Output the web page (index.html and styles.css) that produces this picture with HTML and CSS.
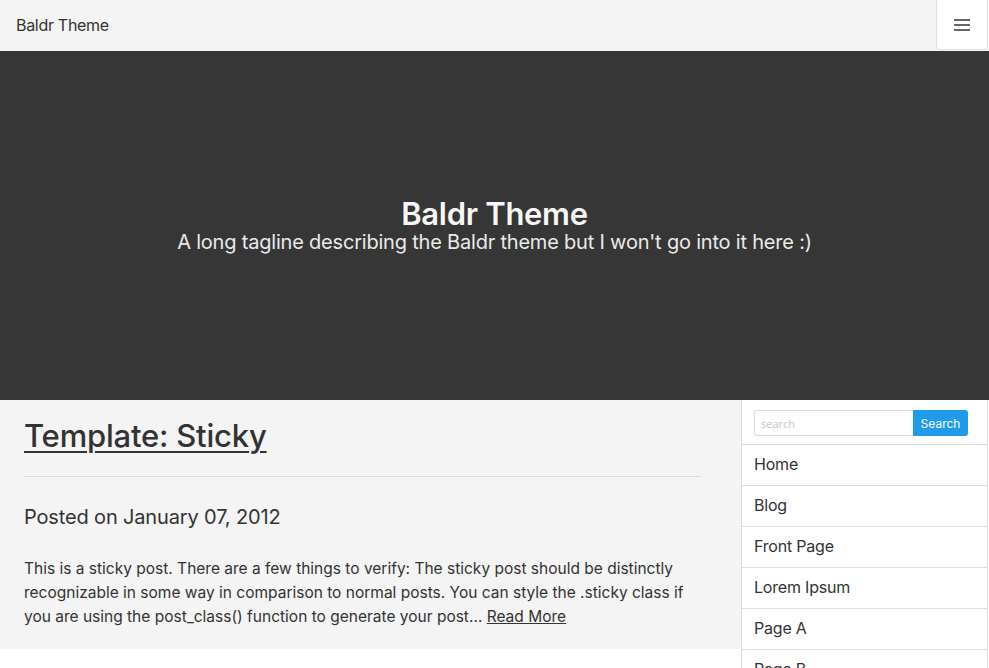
FILE: index.html
```html
<!DOCTYPE html>
<html>
<head>
<meta charset="utf-8">
<link rel="stylesheet" href="styles.css">
</head>
<body>
<nav class="navbar">
  <a class="brand" href="#">Baldr Theme</a>
  <button class="toggler" aria-label="menu">
    <svg width="18" height="14" viewBox="0 0 18 14"><path d="M1 2h16M1 7h16M1 12h16" stroke="#333" stroke-width="1.4"/></svg>
  </button>
</nav>
<header class="hero">
  <h1 class="hero-title">Baldr Theme</h1>
  <p class="hero-tag">A long tagline describing the Baldr theme but I won't go into it here :)</p>
</header>
<div class="layout">
  <main class="content">
    <article class="post">
      <h2 class="post-title"><a href="#">Template: Sticky</a></h2>
      <hr class="rule">
      <p class="post-date">Posted on January 07, 2012</p>
      <p class="post-excerpt">This is a sticky post. There are a few things to verify: The sticky post should be distinctly recognizable in some way in comparison to normal posts. You can style the .sticky class if you are using the post_class() function to generate your post… <a href="#">Read More</a></p>
    </article>
  </main>
  <aside class="sidebar">
    <form class="search">
      <input class="search-input" type="text" placeholder="search">
      <button class="search-btn" type="button">Search</button>
    </form>
    <ul class="menu">
      <li><a href="#">Home</a></li>
      <li><a href="#">Blog</a></li>
      <li><a href="#">Front Page</a></li>
      <li><a href="#">Lorem Ipsum</a></li>
      <li><a href="#">Page A</a></li>
      <li><a href="#">Page B</a></li>
    </ul>
  </aside>
</div>
</body>
</html>
```
FILE: styles.css
```css
* { box-sizing: border-box; }
html, body { margin: 0; padding: 0; }
body {
  font-family: Inter, "Noto Sans", sans-serif;
  color: #333;
  background: #fff;
  overflow: hidden;
}
a { color: #333; }
.navbar {
  height: 51px;
  background: #f4f4f4;
  display: flex;
  align-items: center;
  justify-content: space-between;
  padding-left: 16px;
}
.brand {
  font-size: 16px;
  text-decoration: none;
  color: #333;
  letter-spacing: -0.3px;
  margin-top: -2px;
}
.toggler {
  width: 52px;
  height: 50px;
  align-self: flex-start;
  margin-right: 1px;
  background: #fff;
  border: 1px solid #e0e0e0;
  border-top: none;
  border-radius: 0 0 3px 3px;
  display: flex;
  align-items: center;
  justify-content: center;
  padding: 0;
}
.hero {
  height: 349px;
  background: #363636;
  color: #fff;
  display: flex;
  flex-direction: column;
  align-items: center;
  justify-content: center;
  padding-bottom: 1px;
}
.hero-title {
  margin: 0;
  font-size: 31px;
  font-weight: 600;
  line-height: 33px;
  color: #f6f6f6;
  letter-spacing: -0.3px;
}
.hero-tag {
  margin: 0;
  font-size: 20px;
  line-height: 24px;
  color: #eaeaea;
  letter-spacing: -0.2px;
}
.layout {
  display: flex;
  align-items: flex-start;
}
.content {
  flex: 0 0 741px;
  background: #f4f4f4;
  border-radius: 0 0 4px 4px;
  padding: 16px 40px 8px 24px;
}
.post-title {
  margin: 0;
  font-size: 31px;
  font-weight: 500;
  line-height: 40px;
  letter-spacing: -0.2px;
}
.post-title a { color: #333; text-decoration-thickness: 2px; text-underline-offset: 4px; }
.rule {
  margin: 20px 0 0;
  border: 0;
  border-top: 1px solid #dcdcdc;
}
.post-date {
  margin: 27px 0 0;
  font-size: 20px;
  line-height: 26px;
  letter-spacing: -0.15px;
}
.post-excerpt {
  margin: 27px 0 0;
  font-size: 15.5px;
  line-height: 24px;
  letter-spacing: 0;
  padding-bottom: 12px;
}
.sidebar {
  flex: 0 0 247px;
  background: #fff;
  border: 1px solid #ddd;
  border-top: none;
}
.search {
  display: flex;
  padding: 10px 19px 8px 12px;
  border-bottom: 1px solid #ddd;
}
.search-input {
  flex: 1;
  min-width: 0;
  height: 26px;
  border: 1px solid #ddd;
  border-right: none;
  border-radius: 3px 0 0 3px;
  padding: 0 6px;
  font-family: "Open Sans", sans-serif;
  font-size: 11px;
  color: #333;
}
.search-input::placeholder { color: #c4c4c4; }
.search-btn {
  width: 55px;
  height: 26px;
  border: none;
  background: #1e9be9;
  color: #fff;
  border-radius: 0 3px 3px 0;
  font-family: Inter, sans-serif;
  font-size: 12px;
  padding: 0;
}
.menu {
  list-style: none;
  margin: 0;
  padding: 0;
}
.menu li {
  height: 41px;
  border-bottom: 1px solid #ddd;
  display: flex;
  align-items: center;
  padding-left: 12px;
  padding-bottom: 2px;
}
.menu a {
  text-decoration: none;
  font-size: 16px;
  color: #333;
  letter-spacing: -0.2px;
}
```
